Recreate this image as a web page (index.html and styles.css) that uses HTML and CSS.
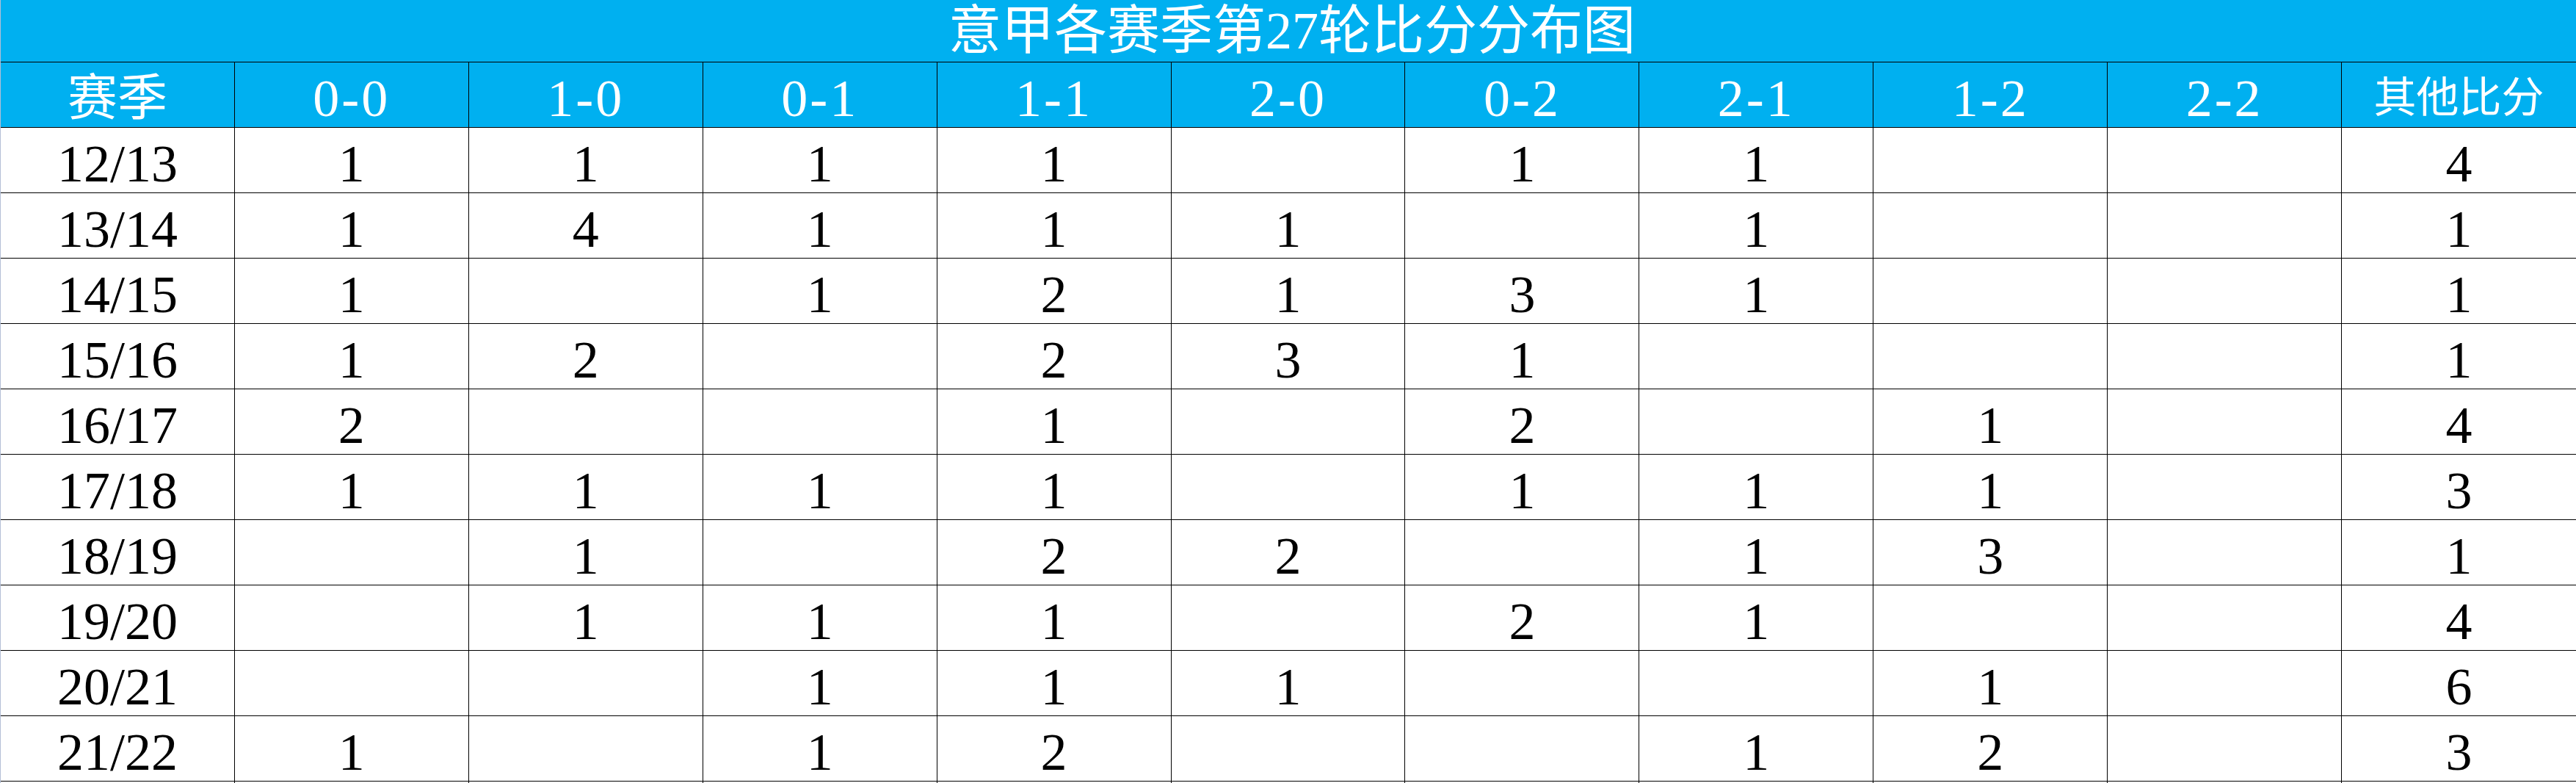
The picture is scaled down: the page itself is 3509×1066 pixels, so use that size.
FILE: index.html
```html
<!DOCTYPE html>
<html lang="zh-CN">
<head>
<meta charset="utf-8">
<title>意甲各赛季第27轮比分分布图</title>
<link rel="stylesheet" href="styles.css">
</head>
<body>
<div class="sheet">
  <div class="title">意甲各赛季第27轮比分分布图</div>
  <div class="row head">
    <div class="cell cjk">赛季</div>
    <div class="cell">0-0</div>
    <div class="cell">1-0</div>
    <div class="cell">0-1</div>
    <div class="cell">1-1</div>
    <div class="cell">2-0</div>
    <div class="cell">0-2</div>
    <div class="cell">2-1</div>
    <div class="cell">1-2</div>
    <div class="cell">2-2</div>
    <div class="cell cjk small">其他比分</div>
  </div>
  <div class="row"><div class="cell">12/13</div><div class="cell">1</div><div class="cell">1</div><div class="cell">1</div><div class="cell">1</div><div class="cell"></div><div class="cell">1</div><div class="cell">1</div><div class="cell"></div><div class="cell"></div><div class="cell">4</div></div>
  <div class="row"><div class="cell">13/14</div><div class="cell">1</div><div class="cell">4</div><div class="cell">1</div><div class="cell">1</div><div class="cell">1</div><div class="cell"></div><div class="cell">1</div><div class="cell"></div><div class="cell"></div><div class="cell">1</div></div>
  <div class="row"><div class="cell">14/15</div><div class="cell">1</div><div class="cell"></div><div class="cell">1</div><div class="cell">2</div><div class="cell">1</div><div class="cell">3</div><div class="cell">1</div><div class="cell"></div><div class="cell"></div><div class="cell">1</div></div>
  <div class="row"><div class="cell">15/16</div><div class="cell">1</div><div class="cell">2</div><div class="cell"></div><div class="cell">2</div><div class="cell">3</div><div class="cell">1</div><div class="cell"></div><div class="cell"></div><div class="cell"></div><div class="cell">1</div></div>
  <div class="row"><div class="cell">16/17</div><div class="cell">2</div><div class="cell"></div><div class="cell"></div><div class="cell">1</div><div class="cell"></div><div class="cell">2</div><div class="cell"></div><div class="cell">1</div><div class="cell"></div><div class="cell">4</div></div>
  <div class="row"><div class="cell">17/18</div><div class="cell">1</div><div class="cell">1</div><div class="cell">1</div><div class="cell">1</div><div class="cell"></div><div class="cell">1</div><div class="cell">1</div><div class="cell">1</div><div class="cell"></div><div class="cell">3</div></div>
  <div class="row"><div class="cell">18/19</div><div class="cell"></div><div class="cell">1</div><div class="cell"></div><div class="cell">2</div><div class="cell">2</div><div class="cell"></div><div class="cell">1</div><div class="cell">3</div><div class="cell"></div><div class="cell">1</div></div>
  <div class="row"><div class="cell">19/20</div><div class="cell"></div><div class="cell">1</div><div class="cell">1</div><div class="cell">1</div><div class="cell"></div><div class="cell">2</div><div class="cell">1</div><div class="cell"></div><div class="cell"></div><div class="cell">4</div></div>
  <div class="row"><div class="cell">20/21</div><div class="cell"></div><div class="cell"></div><div class="cell">1</div><div class="cell">1</div><div class="cell">1</div><div class="cell"></div><div class="cell"></div><div class="cell">1</div><div class="cell"></div><div class="cell">6</div></div>
  <div class="row"><div class="cell">21/22</div><div class="cell">1</div><div class="cell"></div><div class="cell">1</div><div class="cell">2</div><div class="cell"></div><div class="cell"></div><div class="cell">1</div><div class="cell">2</div><div class="cell"></div><div class="cell">3</div></div>
  <div class="row tail"><div class="cell"></div><div class="cell"></div><div class="cell"></div><div class="cell"></div><div class="cell"></div><div class="cell"></div><div class="cell"></div><div class="cell"></div><div class="cell"></div><div class="cell"></div><div class="cell"></div></div>
</div>
</body>
</html>
```
FILE: styles.css
```css
html, body {
  margin: 0;
  padding: 0;
  background: #ffffff;
  overflow: hidden;
}

.sheet {
  width: 3509px;
  box-sizing: border-box;
  border-left: 1px solid #b4bfd6;
  font-family: "Liberation Serif", "Noto Sans CJK SC", serif;
  color: #000000;
}

.title {
  height: 84px;
  border-bottom: 1px solid #000000;
  background: #00b0f0;
  color: #ffffff;
  font-family: "Liberation Serif", "Noto Sans CJK SC", serif;
  font-size: 72px;
  line-height: 84px;
  text-align: center;
  padding-left: 10px;
  overflow: hidden;
}

.row {
  display: grid;
  grid-template-columns: repeat(11, 1fr);
  height: 89px;
  box-sizing: border-box;
  border-bottom: 1px solid #000000;
}

.cell {
  border-right: 1px solid #000000;
  font-size: 72px;
  line-height: 88px;
  padding-top: 5px;
  box-sizing: border-box;
  height: 88px;
  text-align: center;
  overflow: hidden;
  white-space: nowrap;
}

.cell:last-child {
  border-right: none;
}

.row.tail {
  height: 2px;
  border-bottom: none;
}

.tail .cell {
  height: 2px;
  padding: 0;
}

.head {
  background: #00b0f0;
  color: #ffffff;
}

.head .cell {
  letter-spacing: 3px;
}

.head .cjk {
  font-size: 68px;
  letter-spacing: 0;
}

.head .small {
  font-size: 58px;
}
```
